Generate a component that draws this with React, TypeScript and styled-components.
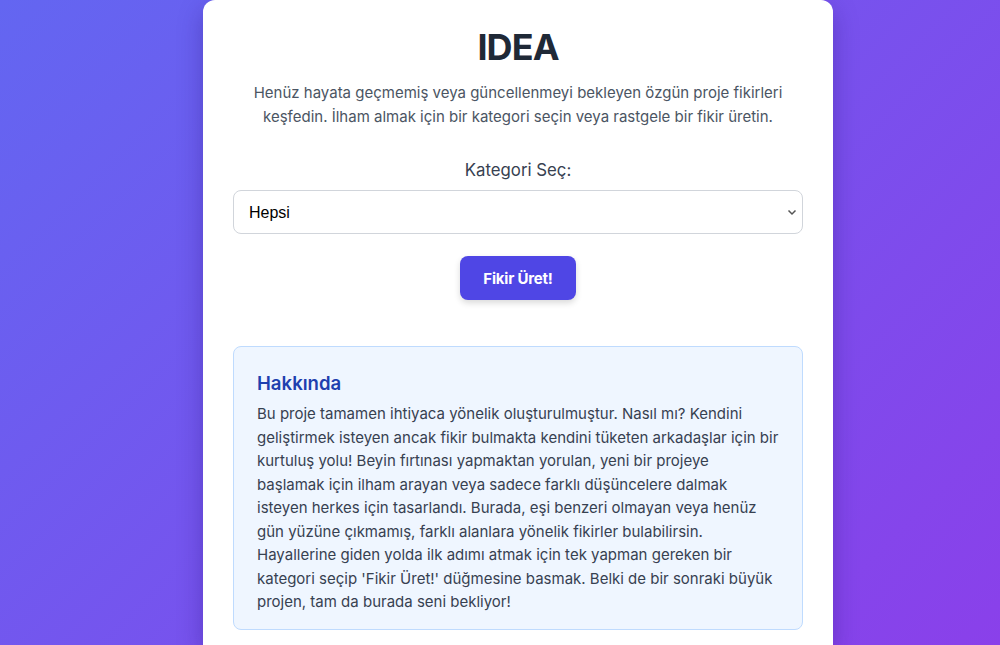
import React, {useState} from 'react';
import styled, {createGlobalStyle} from 'styled-components';

const GlobalStyle = createGlobalStyle`
* {
    box-sizing: border-box;
}
html, body {
    margin: 0;
    padding: 0;
    height: 100%;
}
body {
    font-family: Inter, "Noto Sans", sans-serif;
    background: linear-gradient(135deg, #6366f1 0%, #8a40ea 100%);
    overflow: hidden;
}
`

const Page = styled.div`
display: flex;
justify-content: center;
align-items: flex-start;
padding-left: 36px;
height: 645px;
`

const Card = styled.main`
flex-shrink: 0;
width: 630px;
height: 645px;
background: #ffffff;
border-radius: 12px 12px 0 0;
padding: 27px 30px 0;
box-shadow: 0 10px 25px rgba(40, 20, 120, 0.35);
display: flex;
flex-direction: column;
align-items: center;
`

const Title = styled.h1`
margin: 0;
font-size: 36px;
line-height: 40px;
font-weight: 700;
letter-spacing: -0.9px;
color: #1f2937;
`

const Lead = styled.p`
margin: 14px 0 0;
font-size: 15px;
line-height: 23.5px;
color: #4b5563;
text-align: center;
`

const Field = styled.div`
width: 100%;
margin-top: 30px;
display: flex;
flex-direction: column;
align-items: center;
`

const Label = styled.label`
font-size: 16.8px;
line-height: 24px;
color: #374151;
margin-bottom: 8px;
`

const Select = styled.select`
width: 100%;
height: 44px;
padding: 0 15px;
font-family: "Liberation Sans", Arial, sans-serif;
font-size: 16px;
color: #000;
background: #fff url("data:image/svg+xml;utf8,<svg xmlns='http://www.w3.org/2000/svg' width='10' height='7' viewBox='0 0 10 7'><path d='M1.5 1.5 L5 5 L8.5 1.5' fill='none' stroke='%23555' stroke-width='1.5'/></svg>") no-repeat right 5px center;
border: 1px solid #d1d5db;
border-radius: 8px;
appearance: none;
`

const Button = styled.button`
flex-shrink: 0;
margin-top: 22px;
width: 116px;
height: 44px;
padding: 0;
background: #4f46e5;
color: #fff;
border: none;
border-radius: 8px;
font-family: Inter, "Noto Sans", sans-serif;
font-size: 15px;
font-weight: 700;
letter-spacing: -0.2px;
cursor: pointer;
box-shadow: 0 3px 6px rgba(0, 0, 0, 0.15);
&:hover {
    background: #4338ca;
}
`

const About = styled.section`
flex-shrink: 0;
width: 100%;
margin-top: 46px;
background: #eff6ff;
border: 1px solid #bfdbfe;
border-radius: 8px;
padding: 24px 23px 15px;
`

const AboutTitle = styled.h2`
margin: 0;
font-size: 18.6px;
line-height: 24px;
font-weight: 600;
color: #1e40af;
`

const AboutText = styled.p`
margin: 7px 0 0;
font-size: 15px;
line-height: 23.5px;
color: #374151;
`

const categories: string[] = ['Hepsi', 'Web', 'Mobil', 'Oyun', 'Yapay Zeka', 'Veri Bilimi'];

const App: React.FC = () => {
    const [category, setCategory] = useState<string>('Hepsi')

    return (
        <>
            <GlobalStyle />
            <Page>
                <Card>
                    <Title>IDEA</Title>
                    <Lead>
                        Henüz hayata geçmemiş veya güncellenmeyi bekleyen özgün proje fikirleri keşfedin. İlham almak için bir kategori seçin veya rastgele bir fikir üretin.
                    </Lead>
                    <Field>
                        <Label htmlFor="category">Kategori Seç:</Label>
                        <Select id="category" value={category} onChange={(e) => {setCategory(e.target.value)}}>
                            {categories.map((c) => <option key={c} value={c}>{c}</option>)}
                        </Select>
                    </Field>
                    <Button type="button">Fikir Üret!</Button>
                    <About>
                        <AboutTitle>Hakkında</AboutTitle>
                        <AboutText>
                            Bu proje tamamen ihtiyaca yönelik oluşturulmuştur. Nasıl mı? Kendini geliştirmek isteyen ancak fikir bulmakta kendini tüketen arkadaşlar için bir kurtuluş yolu! Beyin fırtınası yapmaktan yorulan, yeni bir projeye başlamak için ilham arayan veya sadece farklı düşüncelere dalmak isteyen herkes için tasarlandı. Burada, eşi benzeri olmayan veya henüz gün yüzüne çıkmamış, farklı alanlara yönelik fikirler bulabilirsin. Hayallerine giden yolda ilk adımı atmak için tek yapman gereken bir kategori seçip 'Fikir Üret!' düğmesine basmak. Belki de bir sonraki büyük projen, tam da burada seni bekliyor!
                        </AboutText>
                    </About>
                </Card>
            </Page>
        </>
    )
};

export default App;
